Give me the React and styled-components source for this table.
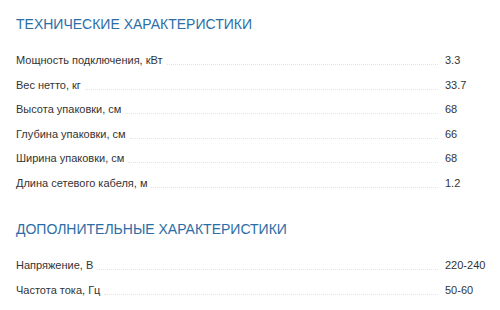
import React from 'react';
import styled, { createGlobalStyle } from 'styled-components';

const Global = createGlobalStyle`
  body {
    margin: 0;
    background: #fff;
    font-family: "Liberation Sans", Arial, sans-serif;
  }
`;

const Page = styled.div`
  display: flex;
  flex-direction: column;
  gap: 28px;
  width: 500px;
  padding: 15px 0 0 16px;
  box-sizing: border-box;
`;

const Section = styled.div``;

const Heading = styled.h2`
  margin: 0 0 11.4px;
  font-size: 14px;
  font-weight: normal;
  line-height: 18px;
  color: #2b6ea6;
  text-transform: uppercase;
`;

const Row = styled.div`
  display: flex;
  align-items: flex-end;
  height: 24.6px;
  font-size: 11px;
  color: #333;
`;

const Label = styled.span`
  padding-bottom: 2px;
  line-height: 14px;
`;

const Dots = styled.span`
  flex: 1;
  margin: 0 7px 4px 4px;
  border-bottom: 1px dotted #e3e3e3;
`;

const Value = styled.span`
  width: 55px;
  padding-bottom: 2px;
  line-height: 14px;
`;

const tech = [
  ['Мощность подключения, кВт', '3.3'],
  ['Вес нетто, кг', '33.7'],
  ['Высота упаковки, см', '68'],
  ['Глубина упаковки, см', '66'],
  ['Ширина упаковки, см', '68'],
  ['Длина сетевого кабеля, м', '1.2'],
];

const extra = [
  ['Напряжение, В', '220-240'],
  ['Частота тока, Гц', '50-60'],
];

const Spec = ({ title, rows }) => (
  <Section>
    <Heading>{title}</Heading>
    {rows.map(([k, v]) => (
      <Row key={k}>
        <Label>{k}</Label>
        <Dots />
        <Value>{v}</Value>
      </Row>
    ))}
  </Section>
);

export default function App() {
  return (
    <>
      <Global />
      <Page>
        <Spec title="Технические характеристики" rows={tech} />
        <Spec title="Дополнительные характеристики" rows={extra} />
      </Page>
    </>
  );
}
